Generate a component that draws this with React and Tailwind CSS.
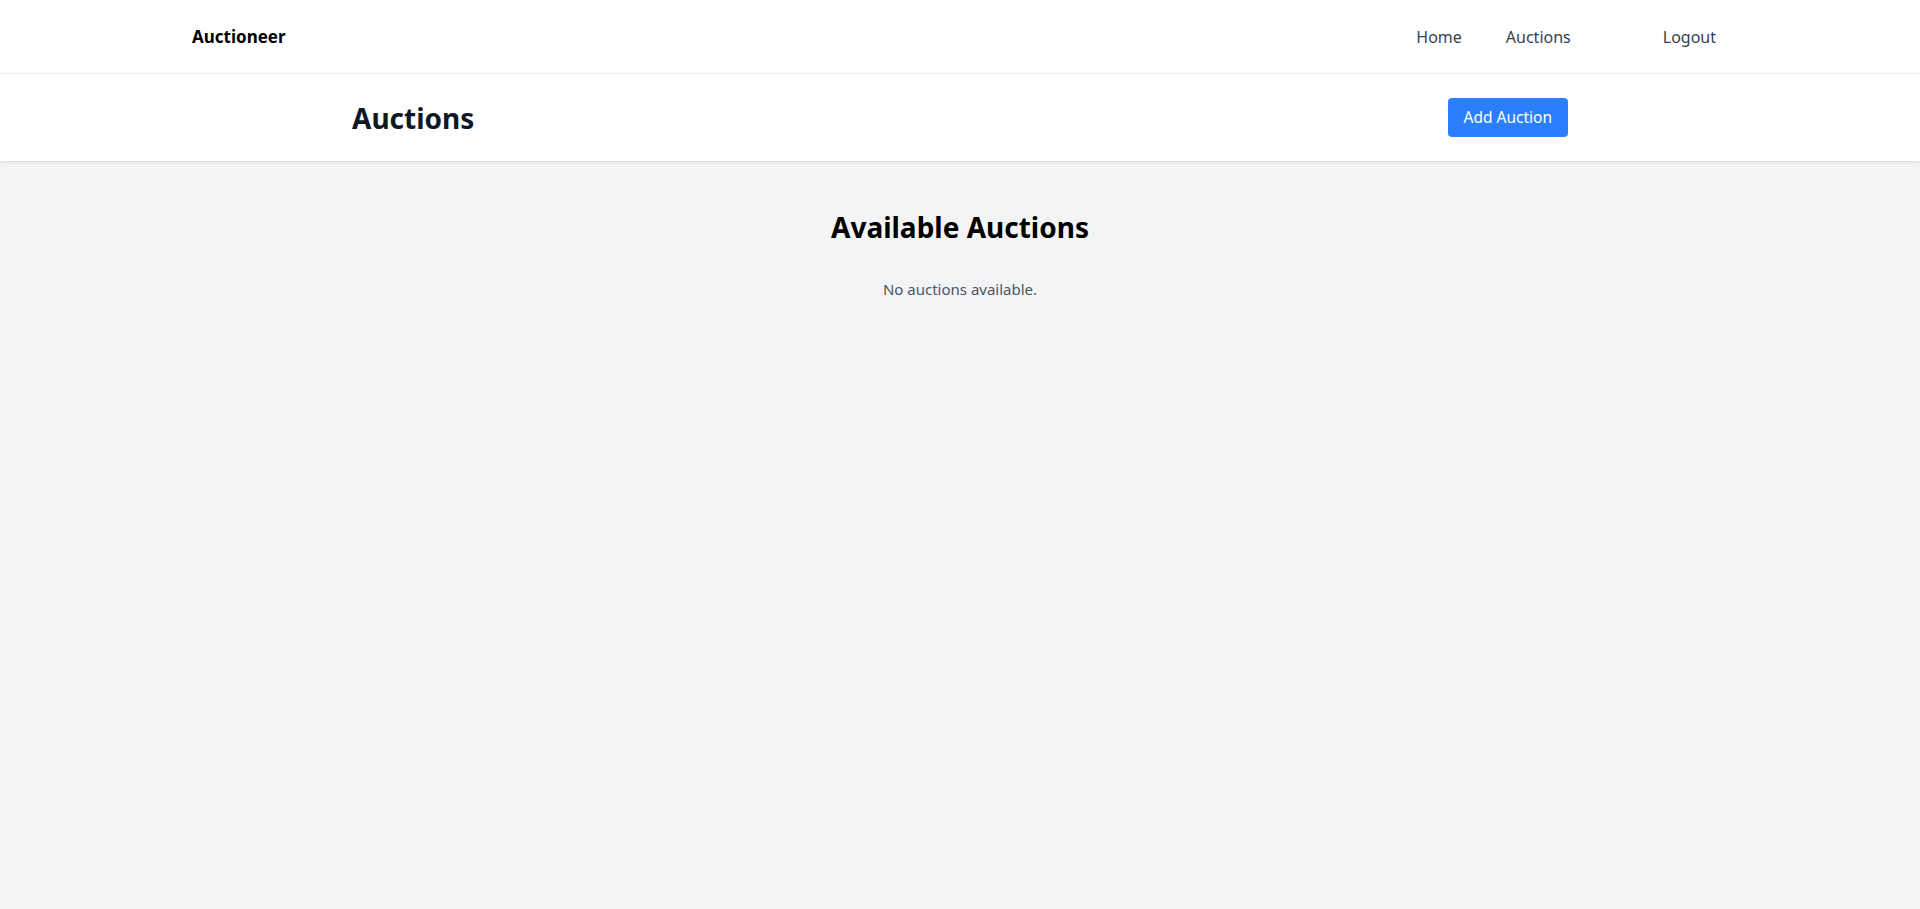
const Navbar = () => {
  return (
    <nav className="bg-white border-b border-gray-100">
      <div className="container mx-auto h-[73px] flex items-center justify-between">
        <a href="#" className="font-bold text-[17px] text-black">Auctioneer</a>
        <div className="flex items-center text-base text-gray-700">
          <a href="#" className="px-3">Home</a>
          <a href="#" className="px-3 ml-[20px]">Auctions</a>
          <button className="px-3 ml-[68px]">Logout</button>
        </div>
      </div>
    </nav>
  );
};

const App = () => {
  const auctions = [];

  return (
    <div className="min-h-screen bg-gray-100 font-['Noto_Sans',sans-serif]">
      <Navbar />
      <header className="bg-white shadow">
        <div className="max-w-7xl mx-auto px-8 py-6 flex items-center justify-between">
          <h1 className="text-[28px] leading-9 font-bold text-gray-900">Auctions</h1>
          <button className="bg-blue-500 hover:bg-blue-600 text-white text-[15.5px] px-4 py-2 rounded">Add Auction</button>
        </div>
      </header>
      <main className="max-w-7xl mx-auto px-8 pt-12">
        <h2 className="text-[28px] leading-9 font-bold text-center mb-8 text-black">Available Auctions</h2>
        {auctions.length === 0 ? (
          <p className="text-center text-[15px] leading-6 text-gray-600">No auctions available.</p>
        ) : null}
      </main>
    </div>
  );
};

export default App;
